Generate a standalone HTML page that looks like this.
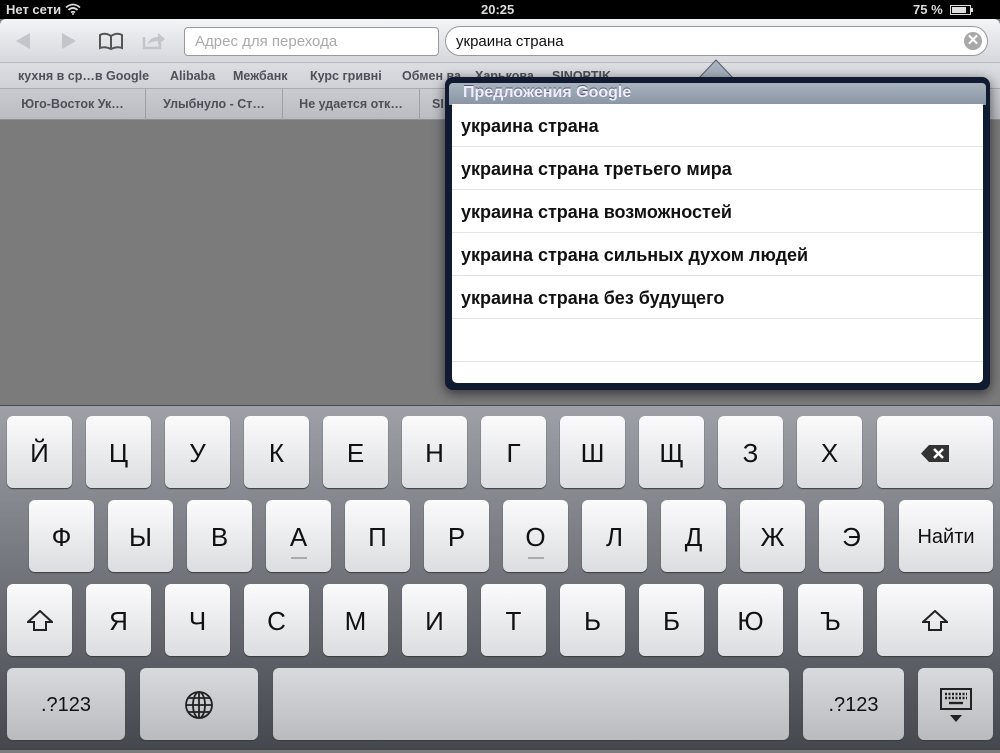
<!DOCTYPE html>
<html><head><meta charset="utf-8"><style>
*{margin:0;padding:0;box-sizing:border-box}
body{width:1000px;height:750px;overflow:hidden;position:relative;font-family:"Liberation Sans",sans-serif;background:#7b7b7b}
.a{position:absolute}
#sb{left:0;top:0;width:1000px;height:19px;background:#000;color:#ddd;font-size:13px;font-weight:bold}
#tb{left:0;top:19px;width:1000px;height:43px;background:linear-gradient(#f3f4f6,#d6d8dd);border-radius:6px 6px 0 0}
#bm{left:0;top:62px;width:1000px;height:26px;background:linear-gradient(#dcdee2,#cfd1d6);border-top:1px solid #b8bac0;font-size:12.5px;font-weight:bold;color:#4d5058}
#tabs{left:0;top:88px;width:1000px;height:32px;background:linear-gradient(#c9cbd0,#babcc2);border-top:1px solid #a9abb1;border-bottom:1px solid #8d8f94}
.tab{position:absolute;top:0;height:31px;border-right:1px solid #9ea0a6;font-size:12.5px;font-weight:bold;color:#4d5058;line-height:30px;text-align:center}
#kb{left:0;top:405px;width:1000px;height:345px;background:linear-gradient(#9ea0a7,#6c6f76 55%,#45484e);border-top:1px solid #4b4b4b}
.k{position:absolute;width:65px;height:72px;border-radius:6px;background:linear-gradient(#fbfbfc,#dcdde0);box-shadow:0 1px 1px #3a3b3f;font-size:26px;color:#111;text-align:center;line-height:75px}
.d{background:linear-gradient(#d9dadd,#b9bbbf)}
.pop{left:445px;top:77px;width:545px;height:313px;background:#101a30;border-radius:8px;box-shadow:0 3px 12px rgba(0,0,0,.6)}
.row{position:absolute;left:0;width:531px;height:43px;border-bottom:1px solid #e4e4e4;font-size:18px;font-weight:bold;color:#111;line-height:44px;padding-left:9px}
</style></head><body>
<div id="sb" class="a"><span class="a" style="left:6px;top:2px">Нет сети</span>
<svg class="a" style="left:65px;top:3px" width="16" height="12" viewBox="0 0 16 12"><path d="M1 4.5Q8-1.5 15 4.5M3.5 7Q8 3 12.5 7M6 9.5Q8 8 10 9.5" stroke="#ddd" stroke-width="1.8" fill="none"/><circle cx="8" cy="11" r="1" fill="#ddd"/></svg>
<span class="a" style="left:481px;top:2px">20:25</span>
<span class="a" style="left:913px;top:2px">75 %</span>
<div class="a" style="left:950px;top:5px;width:21px;height:10px;border:1px solid #ddd"><div style="width:14px;height:6px;margin:1px;background:#ddd"></div></div><div class="a" style="left:971px;top:8px;width:2px;height:4px;background:#ddd"></div>
</div>
<div id="tb" class="a">
<svg class="a" style="left:14px;top:13px" width="18" height="18"><path d="M16 1L2 9l14 8z" fill="#c3c5ca"/></svg>
<svg class="a" style="left:60px;top:13px" width="18" height="18"><path d="M2 1l14 8L2 17z" fill="#c3c5ca"/></svg>
<svg class="a" style="left:98px;top:12px" width="26" height="20" viewBox="0 0 26 20"><path d="M2 4q5-3 11 1q6-4 11-1v13q-5-2-11 1q-6-3-11-1zM13 5v13" stroke="#555" stroke-width="2" fill="none"/></svg>
<svg class="a" style="left:142px;top:11px" width="24" height="20" viewBox="0 0 24 20"><path d="M2 7v11h16v-5" stroke="#c3c5ca" stroke-width="2.5" fill="none"/><path d="M6 14q2-7 10-7V3l7 6-7 6v-4q-6 0-10 3z" fill="#c3c5ca"/></svg>
<div class="a" style="left:184px;top:8px;width:255px;height:29px;background:#fff;border:1px solid #999;border-radius:4px;color:#aaa;font-size:15px;line-height:27px;padding-left:10px">Адрес для перехода</div>
<div class="a" style="left:445px;top:7px;width:543px;height:30px;background:#fff;border:1px solid #999;border-radius:15px;color:#111;font-size:15px;line-height:29px;padding-left:10px">украина страна</div>
<div class="a" style="left:964px;top:13px;width:18px;height:18px;border-radius:9px;background:#a8a8a8;color:#fff;font-size:15px;font-weight:bold;line-height:18px;text-align:center">✕</div>
</div>
<div id="bm" class="a"><span class="a" style="left:18px;top:6px">кухня в ср…в Google</span><span class="a" style="left:170px;top:6px">Alibaba</span><span class="a" style="left:233px;top:6px">Межбанк</span><span class="a" style="left:310px;top:6px">Курс гривні</span><span class="a" style="left:402px;top:6px">Обмен ва</span><span class="a" style="left:475px;top:6px">Харькова</span><span class="a" style="left:552px;top:6px">SINOPTIK</span></div>
<div id="tabs" class="a"><div class="tab" style="left:0;width:146px">Юго-Восток Ук…</div><div class="tab" style="left:146px;width:137px">Улыбнуло - Ст…</div><div class="tab" style="left:283px;width:137px">Не удается отк…</div><div class="tab" style="left:420px;width:60px;text-align:left;padding-left:12px">SI</div></div>
<svg class="a" style="left:698px;top:58px" width="38" height="22"><path d="M0 21L18 2l18 19z" fill="#a8b2bf" stroke="#555d6a"/></svg>
<div class="pop a">
<div class="a" style="left:4px;top:6px;width:537px;height:22px;background:linear-gradient(#a9b3bf,#8995a4);border-radius:4px 4px 0 0;color:#eef;font-size:16px;font-weight:bold;line-height:20px;padding-left:14px;text-shadow:0 -1px 0 #556">Предложения Google</div>
<div class="a" style="left:7px;top:27px;width:531px;height:279px;background:#fff;border-radius:0 0 5px 5px;overflow:hidden">
<div class="row" style="top:0">украина страна</div>
<div class="row" style="top:43px">украина страна третьего мира</div>
<div class="row" style="top:86px">украина страна возможностей</div>
<div class="row" style="top:129px">украина страна сильных духом людей</div>
<div class="row" style="top:172px">украина страна без будущего</div>
<div class="row" style="top:215px"></div>
</div></div>
<div id="kb" class="a"></div>
<div class="k" style="left:7px;top:416px">Й</div><div class="k" style="left:86px;top:416px">Ц</div><div class="k" style="left:165px;top:416px">У</div><div class="k" style="left:244px;top:416px">К</div><div class="k" style="left:323px;top:416px">Е</div><div class="k" style="left:402px;top:416px">Н</div><div class="k" style="left:481px;top:416px">Г</div><div class="k" style="left:560px;top:416px">Ш</div><div class="k" style="left:639px;top:416px">Щ</div><div class="k" style="left:718px;top:416px">З</div><div class="k" style="left:797px;top:416px">Х</div>
<div class="k" style="left:877px;top:416px;width:116px"><svg style="margin-top:28px" width="28" height="17" viewBox="0 0 28 17"><path d="M8 0h20v17H8L0 8.5z" fill="#333"/><path d="M13 4l9 9M22 4l-9 9" stroke="#fff" stroke-width="2.6"/></svg></div>
<div class="k" style="left:29px;top:500px">Ф</div><div class="k" style="left:108px;top:500px">Ы</div><div class="k" style="left:187px;top:500px">В</div><div class="k" style="left:266px;top:500px">А</div><div class="k" style="left:345px;top:500px">П</div><div class="k" style="left:424px;top:500px">Р</div><div class="k" style="left:503px;top:500px">О</div><div class="k" style="left:582px;top:500px">Л</div><div class="k" style="left:661px;top:500px">Д</div><div class="k" style="left:740px;top:500px">Ж</div><div class="k" style="left:819px;top:500px">Э</div>
<div class="a" style="left:291px;top:557px;width:16px;height:2px;background:#aaa"></div><div class="a" style="left:528px;top:557px;width:16px;height:2px;background:#aaa"></div>
<div class="k" style="left:899px;top:500px;width:94px;font-size:20px;line-height:74px">Найти</div>
<div class="k" style="left:7px;top:584px"><svg style="margin-top:26px" width="26" height="22" viewBox="0 0 26 22"><path d="M13 1L1 12h6v8h12v-8h6z" fill="none" stroke="#222" stroke-width="2"/></svg></div>
<div class="k" style="left:86px;top:584px">Я</div><div class="k" style="left:165px;top:584px">Ч</div><div class="k" style="left:244px;top:584px">С</div><div class="k" style="left:323px;top:584px">М</div><div class="k" style="left:402px;top:584px">И</div><div class="k" style="left:481px;top:584px">Т</div><div class="k" style="left:560px;top:584px">Ь</div><div class="k" style="left:639px;top:584px">Б</div><div class="k" style="left:718px;top:584px">Ю</div><div class="k" style="left:798px;top:584px">Ъ</div>
<div class="k" style="left:877px;top:584px;width:116px"><svg style="margin-top:26px" width="26" height="22" viewBox="0 0 26 22"><path d="M13 1L1 12h6v8h12v-8h6z" fill="none" stroke="#222" stroke-width="2"/></svg></div>
<div class="k d" style="left:7px;top:668px;width:118px;font-size:20px;line-height:74px">.?123</div>
<div class="k d" style="left:140px;top:668px;width:118px"><svg style="margin-top:22px" width="30" height="30" viewBox="0 0 30 30" fill="none" stroke="#222" stroke-width="1.8"><circle cx="15" cy="15" r="13"/><ellipse cx="15" cy="15" rx="6" ry="13"/><path d="M15 2v26M2 15h26M4 8h22M4 22h22"/></svg></div>
<div class="k d" style="left:273px;top:668px;width:516px"></div>
<div class="k d" style="left:803px;top:668px;width:101px;font-size:20px;line-height:74px">.?123</div>
<div class="k d" style="left:918px;top:668px;width:75px"><svg style="margin-top:20px" width="32" height="36" viewBox="0 0 32 36"><rect x="1" y="1" width="30" height="20" fill="none" stroke="#222" stroke-width="2"/><path d="M5 6h22M5 10h22" stroke="#222" stroke-width="2.4" stroke-dasharray="2 1.5"/><path d="M9 15h14" stroke="#222" stroke-width="2.4"/><path d="M10 27h12l-6 7z" fill="#222"/></svg></div>
</body></html>
